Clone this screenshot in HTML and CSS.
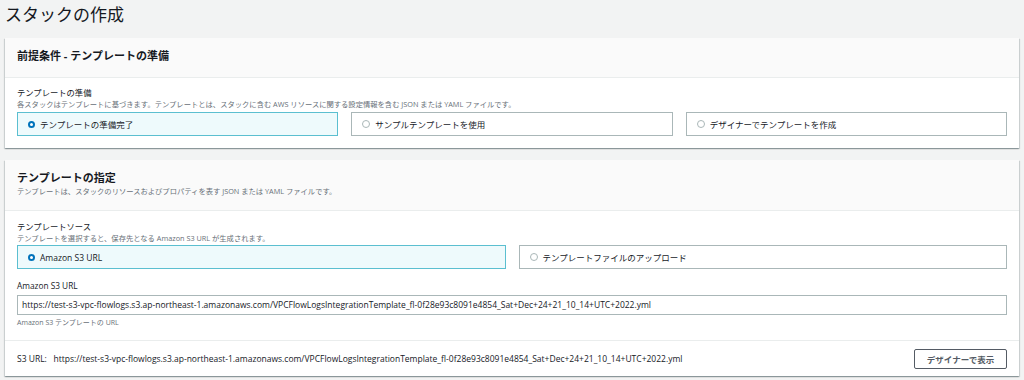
FILE: index.html
```html
<!DOCTYPE html>
<html lang="ja">
<head>
    <meta charset="UTF-8">
    <meta name="viewport" content="width=device-width, initial-scale=1.0">
    <title>スタックの作成</title>
    <link rel="stylesheet" href="styles.css">
</head>
<body>
    <h1 class="page-title">スタックの作成</h1>

    <div class="card">
        <div class="card-header">
            <h2>前提条件 - テンプレートの準備</h2>
        </div>
        <div class="card-body first">
            <div class="field-label">テンプレートの準備</div>
            <div class="field-desc">各スタックはテンプレートに基づきます。テンプレートとは、スタックに含む AWS リソースに関する設定情報を含む JSON または YAML ファイルです。</div>
            <div class="tiles three">
                <div class="tile selected"><span class="radio"></span>テンプレートの準備完了</div>
                <div class="tile"><span class="radio"></span>サンプルテンプレートを使用</div>
                <div class="tile"><span class="radio"></span>デザイナーでテンプレートを作成</div>
            </div>
        </div>
    </div>

    <div class="card">
        <div class="card-header tall">
            <h2>テンプレートの指定</h2>
            <div class="header-desc">テンプレートは、スタックのリソースおよびプロパティを表す JSON または YAML ファイルです。</div>
        </div>
        <div class="card-body">
            <div class="field-label">テンプレートソース</div>
            <div class="field-desc">テンプレートを選択すると、保存先となる Amazon S3 URL が生成されます。</div>
            <div class="tiles two">
                <div class="tile selected"><span class="radio"></span>Amazon S3 URL</div>
                <div class="tile"><span class="radio"></span>テンプレートファイルのアップロード</div>
            </div>

            <div class="field-label url-label">Amazon S3 URL</div>
            <div class="url-input">https://test-s3-vpc-flowlogs.s3.ap-northeast-1.amazonaws.com/VPCFlowLogsIntegrationTemplate_fl-0f28e93c8091e4854_Sat+Dec+24+21_10_14+UTC+2022.yml</div>
            <div class="hint">Amazon S3 テンプレートの URL</div>
        </div>
        <div class="card-footer">
            <span class="s3-url">S3 URL:&nbsp;&nbsp; https://test-s3-vpc-flowlogs.s3.ap-northeast-1.amazonaws.com/VPCFlowLogsIntegrationTemplate_fl-0f28e93c8091e4854_Sat+Dec+24+21_10_14+UTC+2022.yml</span>
            <button class="btn">デザイナーで表示</button>
        </div>
    </div>
</body>
</html>
```

FILE: styles.css
```css
body {
    margin: 0;
    background-color: #f2f3f3;
    font-family: "Open Sans", "Noto Sans CJK JP", sans-serif;
    color: #16191f;
}
.page-title {
    margin: 0;
    padding: 4px 0 0 5px;
    height: 38px;
    box-sizing: border-box;
    font-size: 17px;
    font-weight: normal;
    line-height: 22px;
}
.card {
    margin: 0 5px 12px 5px;
    background-color: white;
    box-shadow: 0 1px 1px 0 rgba(0, 28, 36, 0.25), 1px 1px 1px 0 rgba(0, 28, 36, 0.12), -1px 1px 1px 0 rgba(0, 28, 36, 0.12);
}
.card-header {
    height: 40px;
    padding: 10px 12px 0 12px;
    box-sizing: border-box;
    background-color: #fafafa;
    border-bottom: 1px solid #eaeded;
}
.card-header.tall {
    height: 51px;
}
.card-header h2 {
    margin: 0;
    font-size: 11px;
    font-weight: bold;
    line-height: 16px;
}
.header-desc {
    font-size: 7.3px;
    line-height: 11px;
    color: #687078;
}
.card-body {
    padding: 9px 12px 12px 12px;
}
.card-body.first {
    padding-top: 8px;
    padding-bottom: 12px;
}
.field-label {
    font-size: 8.3px;
    line-height: 13px;
}
.field-desc {
    font-size: 7.3px;
    line-height: 11px;
    color: #687078;
}
.tiles {
    display: grid;
    gap: 13px;
    margin-top: 1px;
}
.first .tiles {
    margin-top: 2px;
}
.tiles.three {
    grid-template-columns: 1fr 1fr 1fr;
}
.tiles.two {
    grid-template-columns: 1fr 1fr;
}
.tile {
    height: 24px;
    box-sizing: border-box;
    border: 1px solid #aab7b8;
    display: flex;
    align-items: center;
    padding-left: 10px;
    font-size: 8.5px;
}
.tile.selected {
    border-color: #5bbfd0;
    background-color: #eefafc;
}
.radio {
    width: 6px;
    height: 6px;
    border-radius: 50%;
    border: 1px solid #aab7b8;
    margin-right: 5px;
}
.tile.selected .radio {
    width: 3px;
    height: 3px;
    border: 2.5px solid #0073bb;
    background-color: white;
}
.url-label {
    margin-top: 11px;
    line-height: 12px;
}
.url-input {
    margin-top: 3px;
    height: 20px;
    box-sizing: border-box;
    border: 1px solid #aab7b8;
    padding: 0 4px;
    font-size: 8.5px;
    line-height: 18px;
    white-space: nowrap;
    overflow: hidden;
}
.hint {
    margin-top: 3px;
    font-size: 7px;
    line-height: 10px;
    color: #687078;
}
.card-footer {
    border-top: 1px solid #eaeded;
    height: 36px;
    box-sizing: border-box;
    padding: 0 12px 0 12px;
    display: flex;
    align-items: center;
    justify-content: space-between;
}
.s3-url {
    font-size: 8.5px;
    white-space: nowrap;
}
.btn {
    width: 93px;
    height: 20px;
    background-color: white;
    border: 1px solid #545b64;
    border-radius: 2px;
    font-family: inherit;
    font-size: 8.5px;
    font-weight: bold;
    color: #545b64;
    padding: 0;
}
```
